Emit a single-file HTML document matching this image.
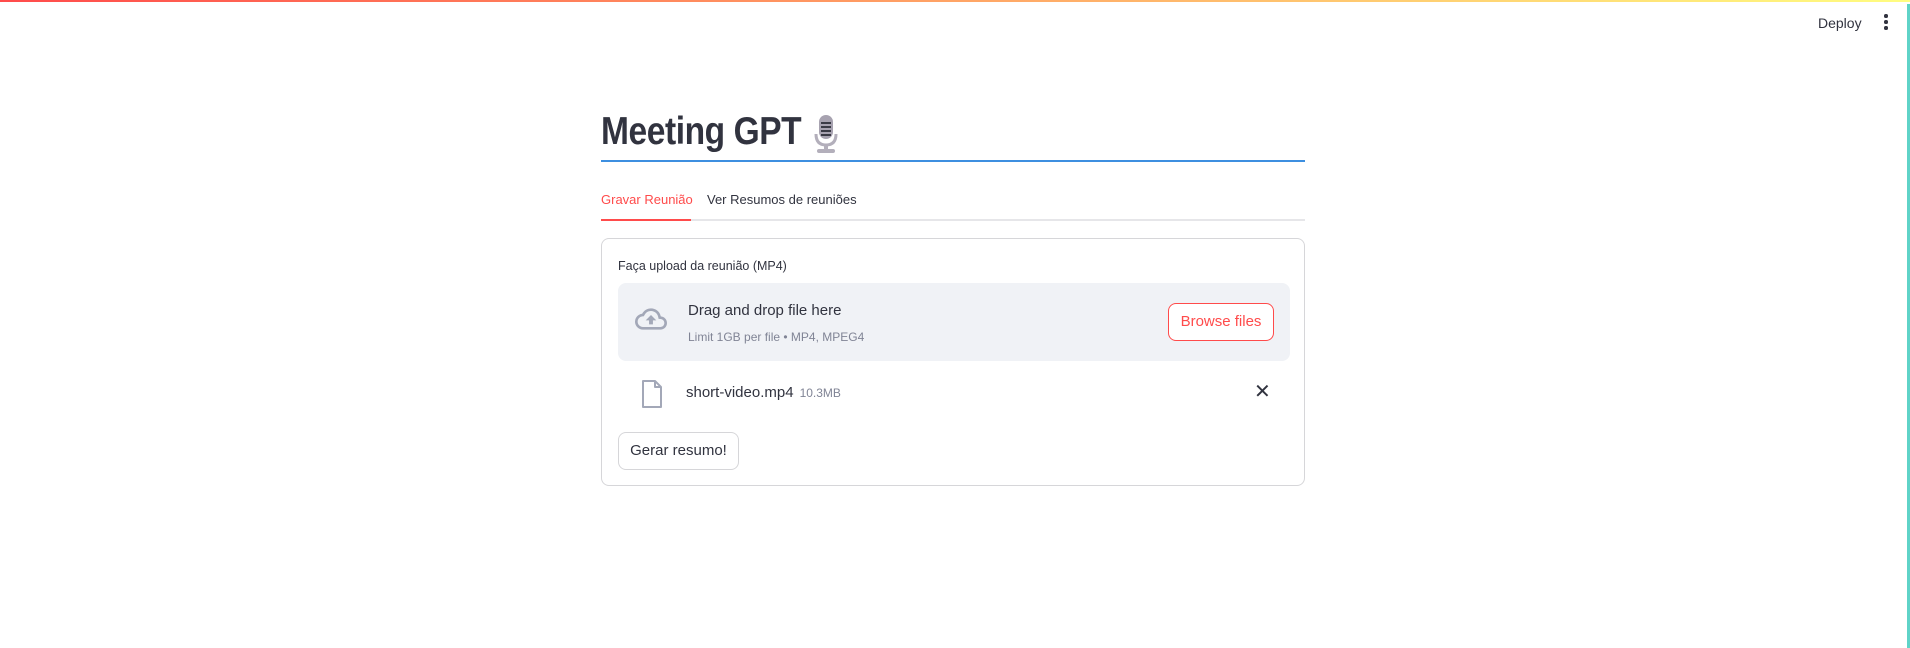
<!DOCTYPE html>
<html><head><meta charset="utf-8"><style>
*{box-sizing:border-box;margin:0;padding:0}
body{width:1910px;height:648px;background:#fff;font-family:"Liberation Sans",sans-serif;color:#31333f;position:relative;overflow:hidden}
.bar{position:absolute;top:0;left:0;width:1910px;height:2px;background:linear-gradient(90deg,#ff4b4b,#fffd80)}
.edge{position:absolute;top:4px;right:0;width:3px;height:644px;background:#5fd3c8}
.deploy{position:absolute;left:1818px;top:15px;font-size:14px;color:#31333f}
.dots{position:absolute;left:1884px;top:14px;width:4px}
.dots i{display:block;width:3.5px;height:3.5px;border-radius:50%;background:#31333f;margin-bottom:2.5px}
.main{position:absolute;left:601px;top:0;width:704px}
h1{position:absolute;top:108px;left:0;font-size:39px;font-weight:bold;letter-spacing:-0.5px;line-height:48px;transform:scaleX(0.86);transform-origin:left}
.mic{position:absolute;left:212px;top:114px}
.uline{position:absolute;top:160px;left:0;width:704px;height:2px;background:#3d8fe0}
.tabs{position:absolute;top:192px;left:0;font-size:13px}
.tabs span{position:absolute;white-space:nowrap}
.tline{position:absolute;top:219px;left:0;width:704px;height:2px;background:#e6e6e9}
.tact{position:absolute;top:219px;left:0;width:90px;height:2px;background:#ff4b4b}
.box{position:absolute;top:238px;left:0;width:704px;height:248px;border:1px solid #d6d6d9;border-radius:8px}
.lbl{position:absolute;left:16px;top:20px;font-size:12.5px}
.drop{position:absolute;left:16px;top:44px;width:672px;height:78px;background:#f0f2f6;border-radius:8px}
.dt{position:absolute;left:70px;top:19px;font-size:15px}
.ds{position:absolute;left:70px;top:47px;font-size:12px;color:#808495}
.br{position:absolute;right:16px;top:20px;width:106px;height:38px;border:1px solid #ff4b4b;border-radius:8px;color:#ff4b4b;font-size:15px;text-align:center;line-height:36px;background:#fff}
.fn{position:absolute;left:84px;top:145px;font-size:15px}
.fn small{font-size:12px;color:#808495;margin-left:6px}
.x{position:absolute;left:652px;top:143px;font-size:20px;line-height:20px}
.gb{position:absolute;left:16px;top:193px;width:121px;height:38px;border:1px solid #d6d6d9;border-radius:8px;font-size:15px;text-align:center;line-height:36px}
</style></head><body>
<div class="bar"></div><div class="edge"></div>
<div class="deploy">Deploy</div>
<div class="dots"><i></i><i></i><i></i></div>
<div class="main">
<h1>Meeting GPT</h1>
<svg class="mic" width="26" height="40" viewBox="0 0 26 40">
<rect x="6" y="1" width="14" height="24" rx="7" fill="#a7a2b0"/>
<g stroke="#3a3a45" stroke-width="2"><line x1="8" y1="9" x2="18" y2="9"/><line x1="8" y1="13" x2="18" y2="13"/><line x1="8" y1="17" x2="18" y2="17"/><line x1="8" y1="21" x2="18" y2="21"/></g>
<path d="M3 20 Q3 31 13 31 Q23 31 23 20" fill="none" stroke="#b3afbb" stroke-width="3"/>
<rect x="11" y="31" width="4" height="5" fill="#b3afbb"/>
<rect x="4" y="35" width="18" height="4" rx="2" fill="#b3afbb"/>
</svg>
<div class="uline"></div>
<div class="tabs"><span style="left:0;color:#ff4b4b">Gravar Reunião</span><span style="left:106px">Ver Resumos de reuniões</span></div>
<div class="tline"></div><div class="tact"></div>
<div class="box">
<div class="lbl">Faça upload da reunião (MP4)</div>
<div class="drop">
<svg style="position:absolute;left:14px;top:20px" width="38" height="32" viewBox="0 0 24 24"><path d="M19.35 10.04A7.49 7.49 0 0 0 12 4C9.11 4 6.6 5.64 5.35 8.04A5.994 5.994 0 0 0 0 14c0 3.31 2.69 6 6 6h13c2.76 0 5-2.240 5-5 0-2.64-2.05-4.78-4.65-4.96zM19 18H6c-2.21 0-4-1.790-4-4 0-2.05 1.53-3.76 3.56-3.970l1.07-.11.5-.95A5.469 5.469 0 0 1 12 6c2.62 0 4.88 1.86 5.39 4.43l.3 1.5 1.53.11A2.98 2.98 0 0 1 22 15c0 1.65-1.35 3-3 3zM8 13h2.55v3h2.9v-3H16l-4-4z" fill="#a3a8b8"/></svg>
<div class="dt">Drag and drop file here</div>
<div class="ds">Limit 1GB per file • MP4, MPEG4</div>
<div class="br">Browse files</div>
</div>
<svg style="position:absolute;left:38px;top:140px" width="24" height="30" viewBox="0 0 24 30"><path d="M3 2h12l6 6v20H3z M15 2v6h6" fill="none" stroke="#a3a8b8" stroke-width="2" stroke-linejoin="round"/></svg>
<div class="fn">short-video.mp4<small>10.3MB</small></div>
<div class="x">✕</div>
<div class="gb">Gerar resumo!</div>
</div>
</div>
</body></html>
